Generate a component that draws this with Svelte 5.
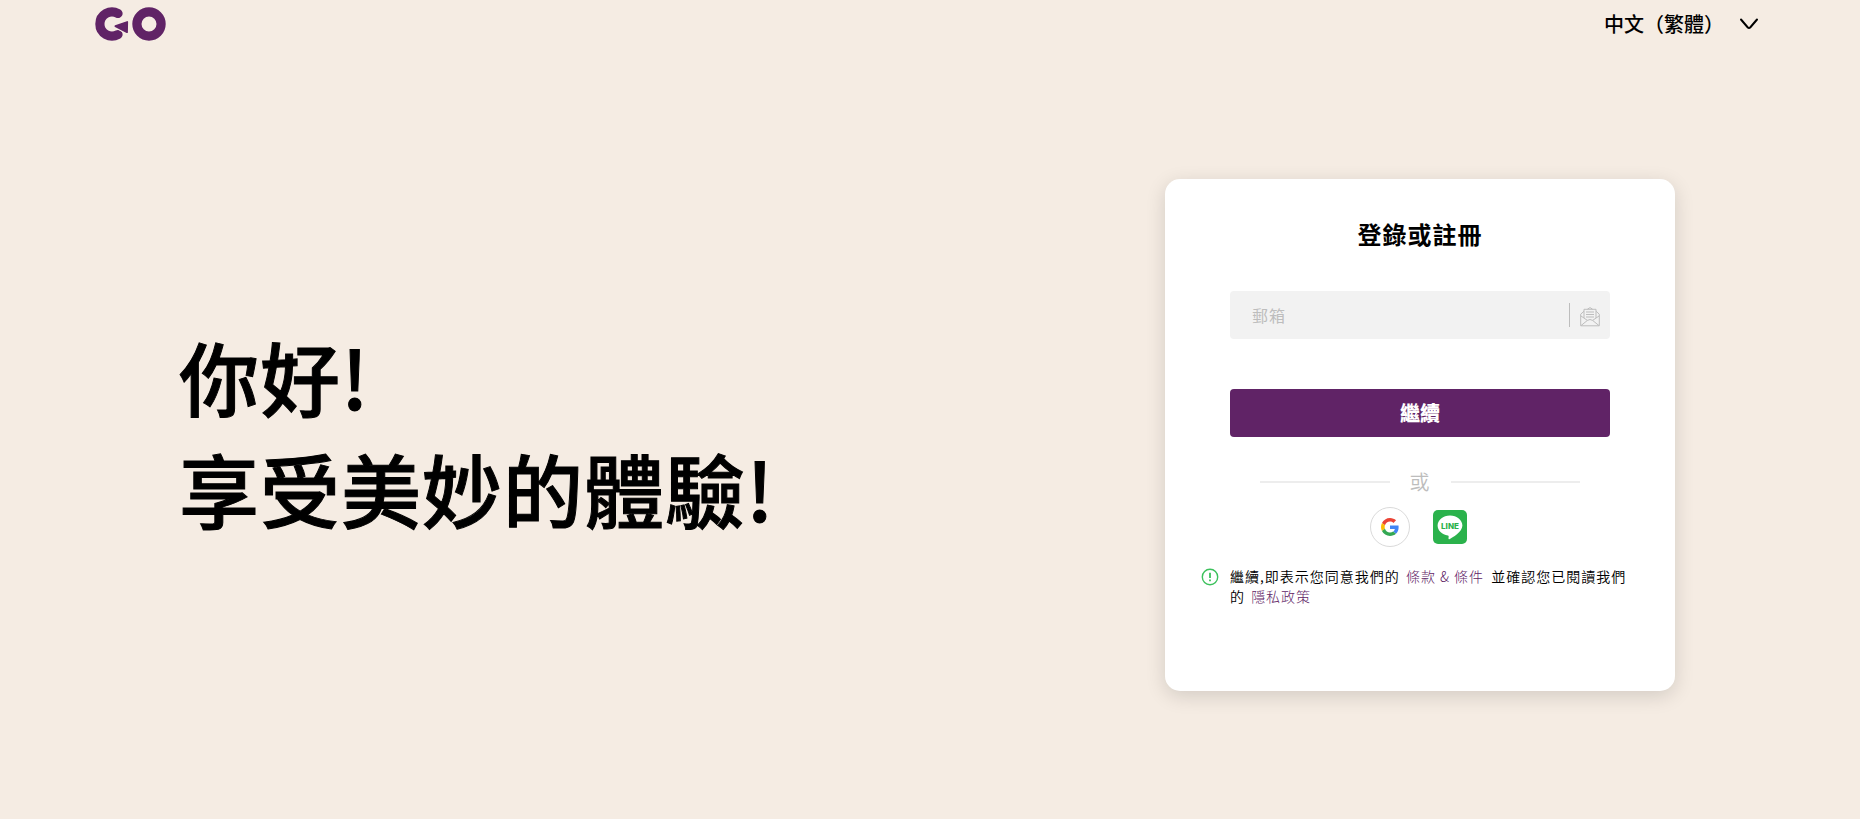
<script lang="ts">
  const languages = ['中文（繁體）', 'English', '日本語'];

  let language = $state(languages[0]);
  let email = $state('');

  function submit(event: SubmitEvent) {
    event.preventDefault();
  }
</script>

<div class="page" lang="zh-Hant">
  <header class="header">
    <a class="logo" href="/" aria-label="GO">
      <svg width="72" height="34" viewBox="0 0 72 34" fill="none">
        <path d="M23 6.5A12.1 12.1 0 1 0 23 27.5" stroke="#602366" stroke-width="9.2" stroke-linecap="round" />
        <path d="M19.5 19.2 32.2 15 32 25.4Z" fill="#f5ece3" stroke="#f5ece3" stroke-width="3.4" stroke-linejoin="round" />
        <path d="M20.4 19.2 32.2 15 32 25.2Z" fill="#602366" stroke="#602366" stroke-width="1.8" stroke-linejoin="round" />
        <circle cx="54" cy="17" r="12.1" stroke="#602366" stroke-width="9.2" />
      </svg>
    </a>
    <label class="language">
      <select bind:value={language} aria-label="語言">
        {#each languages as name}
          <option value={name}>{name}</option>
        {/each}
      </select>
      <svg class="chevron" width="20" height="12" viewBox="0 0 20 12" fill="none">
        <path d="M2 1.5 8.6 9.2Q10 10.6 11.4 9.2L18 1.5" stroke="#000" stroke-width="2" stroke-linecap="round" />
      </svg>
    </label>
  </header>

  <main class="main">
    <h1 class="greeting">你好!<br />享受美妙的體驗!</h1>

    <section class="card">
      <h2 class="title">登錄或註冊</h2>

      <form class="form" onsubmit={submit}>
        <div class="field">
          <input type="email" placeholder="郵箱" aria-label="郵箱" bind:value={email} />
          <span class="field-icon">
            <svg width="20" height="20" viewBox="0 0 20 20" fill="none" stroke="#bdbdbd" stroke-linejoin="round">
              <path d="M4 4.2.7 7.2V18.8H19.3V7.2L16 4.2" />
              <path d="M4 11V2.3H16V11M7.4 2.2 10 .6 12.6 2.2" />
              <path d="M.7 8.8 7.4 13.4Q10 11.6 12.6 13.4L19.3 8.8M1 18.6 7.4 13.4M19 18.6 12.6 13.4" />
              <path d="M6 5H14M6 7.5H14M6 10H14" />
            </svg>
          </span>
        </div>
        <button class="submit" type="submit">繼續</button>
      </form>

      <div class="divider"><span>或</span></div>

      <div class="socials">
        <button class="social google" type="button" aria-label="Google">
          <svg width="18" height="18" viewBox="0 0 48 48">
            <path fill="#ea4335" d="M24 9.5c3.54 0 6.71 1.22 9.21 3.6l6.85-6.85C35.9 2.38 30.47 0 24 0 14.62 0 6.51 5.38 2.56 13.22l7.98 6.19C12.43 13.72 17.74 9.5 24 9.5z" />
            <path fill="#4285f4" d="M46.98 24.55c0-1.57-.15-3.09-.38-4.55H24v9.02h12.94c-.58 2.96-2.26 5.48-4.78 7.18l7.73 6c4.51-4.18 7.09-10.36 7.09-17.65z" />
            <path fill="#fbbc05" d="M10.53 28.59c-.48-1.45-.76-2.99-.76-4.59s.27-3.14.76-4.59l-7.98-6.19C.92 16.46 0 20.12 0 24c0 3.88.92 7.54 2.56 10.78l7.97-6.19z" />
            <path fill="#34a853" d="M24 48c6.48 0 11.93-2.13 15.89-5.81l-7.73-6c-2.15 1.45-4.92 2.3-8.16 2.3-6.26 0-11.57-4.22-13.47-9.91l-7.98 6.19C6.51 42.62 14.62 48 24 48z" />
          </svg>
        </button>
        <button class="social" type="button" aria-label="LINE">
          <svg width="34" height="34" viewBox="0 0 34 34">
            <rect width="34" height="34" rx="5" fill="#2bb24c" />
            <path fill="#fff" d="M17 5.4C10.1 5.4 4.6 9.9 4.6 15.5c0 5 4.4 9.2 10.3 9.95.95.2.85.7.7 1.9-.1.9-.3 2.2.7 1.8 3-1.3 13.1-7.3 13.1-13.65C29.4 9.9 23.9 5.4 17 5.4z" />
            <text x="17" y="19" text-anchor="middle">LINE</text>
          </svg>
        </button>
      </div>

      <div class="notice">
        <svg width="18" height="18" viewBox="0 0 18 18" fill="none" stroke="#3cc15c">
          <circle cx="9" cy="9" r="7.7" stroke-width="1.4" />
          <path d="M9 4.8V10M9 11.6V13.2" stroke-width="1.8" />
        </svg>
        <p>
          繼續,即表示您同意我們的 <a href="/terms">條款 &amp; 條件</a> 並確認您已閱讀我們的 <a href="/privacy">隱私政策</a>
        </p>
      </div>
    </section>
  </main>
</div>

<style>
  :global(body) {
    margin: 0;
    background: #f5ece3;
  }
  .page {
    min-height: 100vh;
    display: flex;
    flex-direction: column;
    color: #000;
    font-family: "Noto Sans CJK TC", "Noto Sans", sans-serif;
  }
  .page :is(button, input, select) {
    box-sizing: border-box;
    margin: 0;
    border: 0;
    font-family: inherit;
  }

  .header {
    height: 48px;
    padding: 0 101px 0 95px;
    display: flex;
    justify-content: space-between;
    align-items: center;
  }
  .logo {
    display: flex;
  }
  .language {
    position: relative;
    display: flex;
    align-items: center;
  }
  .language select {
    width: 155px;
    height: 32px;
    padding: 0 0 2px;
    appearance: none;
    background: none;
    color: #000;
    font-size: 20px;
    font-weight: 500;
    cursor: pointer;
  }
  .chevron {
    position: absolute;
    right: 0;
    pointer-events: none;
  }

  .main {
    flex: 1;
    padding: 2px 185px 0 179px;
    display: flex;
    justify-content: space-between;
    align-items: center;
    gap: 40px;
  }
  .greeting {
    margin: 0;
    padding-bottom: 8px;
    font-size: 80px;
    font-weight: 500;
    line-height: 112px;
    letter-spacing: 1px;
    -webkit-text-stroke: 1px #000;
  }

  .card {
    box-sizing: border-box;
    width: 510px;
    padding: 39px 36px 85px;
    background: #fff;
    border-radius: 15px;
    box-shadow: 0 5px 20px rgb(0 0 0 / 14%);
    letter-spacing: 1px;
  }
  .title {
    margin: 0 0 41px;
    font-size: 24px;
    font-weight: 700;
    line-height: 32px;
    text-align: center;
  }
  .form {
    margin: 0 29px;
    display: flex;
    flex-direction: column;
    gap: 50px;
  }
  .field {
    height: 48px;
    display: flex;
    align-items: center;
    background: #f2f2f2;
    border-radius: 4px;
  }
  .field input {
    flex: 1;
    min-width: 0;
    height: 100%;
    padding: 0 22px;
    background: none;
    font-size: 16px;
    letter-spacing: 1px;
    outline: none;
  }
  .field input::placeholder {
    color: #bdbdbd;
  }
  .field-icon {
    box-sizing: border-box;
    height: 24px;
    padding: 4px 10px 0;
    display: flex;
    align-items: center;
    border-left: 1px solid #bdbdbd;
  }
  .submit {
    height: 48px;
    padding-bottom: 2px;
    background: #602366;
    border-radius: 4px;
    color: #fff;
    font-size: 20px;
    font-weight: 900;
    cursor: pointer;
  }

  .divider {
    margin: 30px 59px 10px;
    display: flex;
    align-items: center;
    gap: 20px;
    color: #bdbdbd;
    font-size: 20px;
    font-weight: 350;
    line-height: 30px;
  }
  .divider::before,
  .divider::after {
    content: "";
    flex: 1;
    height: 2px;
    background: #ededed;
  }

  .socials {
    display: flex;
    justify-content: center;
    align-items: center;
    gap: 20px;
  }
  .social {
    width: 40px;
    height: 40px;
    padding: 0;
    display: flex;
    justify-content: center;
    align-items: center;
    background: none;
    cursor: pointer;
  }
  .page .google {
    border: 1px solid #dadada;
    border-radius: 50%;
  }
  .social text {
    fill: #2bb24c;
    font-family: Inter, sans-serif;
    font-size: 8px;
    font-weight: 800;
    letter-spacing: 0;
  }

  .notice {
    margin-top: 19px;
    display: flex;
    align-items: flex-start;
    gap: 11px;
  }
  .notice svg {
    flex: none;
    margin-top: 2px;
  }
  .notice p {
    margin: 0;
    font-size: 14px;
    font-weight: 350;
    line-height: 20px;
  }
  .notice a {
    margin: 0 3px 0 2px;
    color: #602366;
    font-weight: 300;
    text-decoration: none;
  }
</style>
